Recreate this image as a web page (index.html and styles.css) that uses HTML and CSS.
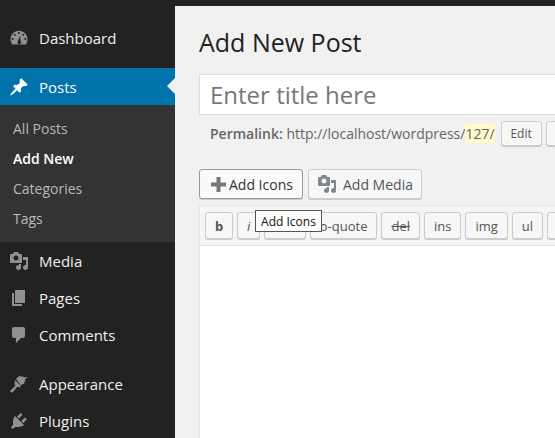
FILE: index.html
```html
<!DOCTYPE html>
<html lang="en">
<head>
<meta charset="utf-8">
<title>Add New Post</title>
<link rel="stylesheet" href="styles.css">
</head>
<body>
<div class="topbar"></div>
<div class="shell">
  <nav class="sidebar">
    <a class="item first"><svg class="ico" viewBox="0 0 20 20"><path fill-rule="evenodd" d="M3.300 16.500h13.400c1.100-1.400 1.800-3.300 1.800-5.300 0-4.700-3.800-8.500-8.500-8.500s-8.500 3.800-8.500 8.500c0 2 .7 3.900 1.800 5.300zM10 4a1 1 0 1 1 0 2 1 1 0 0 1 0-2zM5.800 5.700a1 1 0 1 1 0 2 1 1 0 0 1 0-2zm8.400 0a1 1 0 1 1 0 2 1 1 0 0 1 0-2zM3.700 10a1 1 0 1 1 0 2 1 1 0 0 1 0-2zm12.600 0a1 1 0 1 1 0 2 1 1 0 0 1 0-2zM11.200 7.500l.3 5.500a1.800 1.800 0 1 1-2.600.2z"/></svg><span>Dashboard</span></a>
    <a class="item current"><svg class="ico" viewBox="0 0 20 20"><path d="M10.440 3.020l1.820-1.820 6.360 6.350-1.830 1.820c-1.050-.68-2.480-.57-3.410.36l-.75.75c-.92.930-1.040 2.350-.35 3.410l-1.830 1.820-2.410-2.410-2.800 2.790c-.42.420-3.380 2.710-3.800 2.290s1.860-3.390 2.280-3.810l2.790-2.790L4.100 9.360l1.830-1.820c1.050.69 2.480.57 3.400-.36l.75-.75c.93-.92 1.050-2.350.36-3.410z"/></svg><span>Posts</span><i class="notch"></i></a>
    <div class="submenu">
      <a>All Posts</a>
      <a class="on">Add New</a>
      <a>Categories</a>
      <a>Tags</a>
    </div>
    <a class="item"><svg class="ico" viewBox="0 0 20 20"><path d="M13 11V4c0-.55-.45-1-1-1h-1.670L9 1H5L3.670 3H2c-.55 0-1 .45-1 1v7c0 .55.45 1 1 1h10c.55 0 1-.45 1-1zM7 4.500c1.380 0 2.500 1.120 2.500 2.500S8.380 9.500 7 9.500 4.500 8.380 4.500 7 5.620 4.500 7 4.500zM14 6h5v10.500c0 1.380-1.120 2.500-2.500 2.500S14 17.880 14 16.500s1.120-2.500 2.500-2.500c.17 0 .34.020.5.050V9h-3V6zm-4 8.050V13h2v3.500c0 1.380-1.120 2.500-2.500 2.500S7 17.880 7 16.500 8.120 14 9.500 14c.17 0 .34.020.5.050z" fill-rule="evenodd"/></svg><span>Media</span></a>
    <a class="item"><svg class="ico" viewBox="0 0 20 20"><path d="M6 15V2h10v13H6zm-1 1h8v2H3V5h2v11z"/></svg><span>Pages</span></a>
    <a class="item"><svg class="ico" viewBox="0 0 20 20"><path d="M5 2h9c1.100 0 2 .9 2 2v7c0 1.100-.9 2-2 2h-2l-5 5v-5H5c-1.100 0-2-.9-2-2V4c0-1.100.9-2 2-2z"/></svg><span>Comments</span></a>
    <a class="item sep"><svg class="ico" viewBox="0 0 20 20"><path d="M7 5l2-2 2-1.500 1 1.500 2-1 .5 1.500 4-.5-3 3 1.500 1.500-2 .5.5 2-2 0-1.500 1.500zM6 6l6 6-2 1.500-1.500-1L4 18c-.6.7-1.800.6-2.300.1-.5-.5-.4-1.500.3-2.100l4.500-4.500-1-1.500z"/></svg><span>Appearance</span></a>
    <a class="item"><svg class="ico" viewBox="0 0 20 20"><path d="M13.110 4.360L9.870 7.600 8 5.730l3.240-3.240c.35-.34 1.050-.2 1.560.32.52.51.66 1.210.31 1.550zm-8 1.770l.91-1.120 9.010 9.010-1.190.84c-.71.710-2.630 1.160-3.820 1.160H6.140L4.900 17.260c-.59.590-1.540.59-2.120 0-.59-.58-.59-1.530 0-2.120l1.240-1.240v-3.880c0-1.130.4-3.050 1.090-3.890zm7.260 3.970l3.240-3.240c.34-.35 1.040-.21 1.550.31.520.51.66 1.210.31 1.560l-3.240 3.240z"/></svg><span>Plugins</span></a>
  </nav>
  <main class="content">
    <h1>Add New Post</h1>
    <div class="title-box">Enter title here</div>
    <div class="permalink"><span class="url"><b>Permalink:</b> http://localhost/wordpress/<mark>127/</mark></span><button class="btn small">Edit</button><button class="btn small stub"></button></div>
    <div class="media-row">
      <button class="btn big active"><svg class="plus" viewBox="0 0 15 15"><path d="M5.500 0h4v5.500H15v4H9.500V15h-4V9.500H0v-4h5.500z"/></svg>Add Icons</button>
      <button class="btn big"><svg class="mini" viewBox="0 0 20 20"><path d="M13 11V4c0-.55-.45-1-1-1h-1.670L9 1H5L3.670 3H2c-.55 0-1 .45-1 1v7c0 .55.45 1 1 1h10c.55 0 1-.45 1-1zM7 4.500c1.380 0 2.500 1.120 2.500 2.500S8.380 9.500 7 9.500 4.500 8.380 4.500 7 5.620 4.500 7 4.500zM14 6h5v10.500c0 1.380-1.120 2.500-2.500 2.500S14 17.880 14 16.500s1.120-2.500 2.500-2.500c.17 0 .34.020.5.050V9h-3V6zm-4 8.050V13h2v3.500c0 1.380-1.120 2.500-2.500 2.500S7 17.880 7 16.500 8.120 14 9.500 14c.17 0 .34.020.5.050z" fill-rule="evenodd"/></svg>Add Media</button>
    </div>
    <div class="editor">
      <div class="toolbar">
        <button class="qt strong">b</button>
        <button class="qt em">i</button>
        <button class="qt">link</button>
        <button class="qt">b-quote</button>
        <button class="qt strike">del</button>
        <button class="qt">ins</button>
        <button class="qt">img</button>
        <button class="qt">ul</button>
        <button class="qt">ol</button>
      </div>
      <div class="tooltip">Add Icons</div>
      <div class="area"></div>
    </div>
  </main>
</div>
</body>
</html>
```
FILE: styles.css
```css
html, body { margin: 0; height: 100%; overflow: hidden; }
body { background: #f1f1f1; font-family: "Open Sans", sans-serif; font-size: 14px; color: #444; }
.topbar { height: 6px; background: #222; }
.shell { display: flex; height: 432px; }
.sidebar { flex: 0 0 175px; background: #222; padding-top: 13px; color: #eee; font-size: 15px; }
.item { display: flex; align-items: center; height: 37px; color: #eee; position: relative; }
.item.first { margin-bottom: 12px; }
.item.sep { margin-top: 12px; }
.item span { margin-left: 10px; }
.ico { width: 20px; height: 20px; margin-left: 9px; fill: #8f9092; flex: none; }
.current { background: #0073aa; color: #fff; }
.current .ico { fill: #fff; }
.notch { position: absolute; right: 0; top: 10px; border: 8px solid transparent; border-right-color: #f1f1f1; border-left-width: 0; }
.submenu { background: #333; padding: 9px 0 8px; display: flex; flex-direction: column; }
.submenu a { height: 30px; line-height: 30px; padding-left: 13px; color: #b4b9be; font-size: 14px; }
.submenu .on { color: #fff; font-weight: 600; }
.content { flex: 1; min-width: 0; padding-left: 24px; overflow: hidden; }
h1 { margin: 0; height: 68px; box-sizing: border-box; padding-top: 17px; font-size: 25px; font-weight: 400; line-height: 39px; color: #222; }
.title-box { width: 500px; height: 41px; box-sizing: border-box; border: 1px solid #ddd; background: #fff; color: #777; font-size: 24px; line-height: 39px; padding-left: 10px; }
.permalink { display: flex; align-items: center; height: 26px; margin-top: 5px; padding-left: 11px; width: 500px; white-space: pre; color: #666; }
.permalink b { font-weight: 600; }
mark { background: #fffbcc; color: #666; }
.btn { font-family: inherit; background: #f7f7f7; border: 1px solid #ccc; border-radius: 3px; color: #555; box-shadow: 0 1px 0 #ccc; padding: 0; flex: none; }
.small { height: 25px; width: 41px; font-size: 12px; margin-left: 6px; }
.stub { margin-left: 4px; }
.media-row { display: flex; gap: 5px; margin-top: 23px; }
.big { height: 30px; font-size: 14px; display: flex; align-items: center; }
.big.active { width: 104px; border-color: #999; color: #333; padding-left: 11px; background: #fafafa; }
.big:not(.active) { width: 114px; padding-left: 8px; }
.plus { width: 15px; height: 15px; fill: #777; margin-right: 3px; }
.mini { width: 20px; height: 20px; fill: #82878c; margin-right: 6px; }
.editor { position: relative; margin-top: 6px; width: 500px; border: 1px solid #e5e5e5; border-bottom: 0; background: #fff; height: 300px; }
.toolbar { display: flex; gap: 4px; background: #f5f5f5; border-bottom: 1px solid #e5e5e5; height: 40px; box-sizing: border-box; padding: 6px 5px; }
.qt { font-family: inherit; font-size: 13px; height: 27px; padding: 0 9px; background: #f7f7f7; border: 1px solid #ccc; border-radius: 3px; box-shadow: 0 1px 0 #ccc; color: #555; flex: none; }
.strong { font-weight: 700; }
.em { font-style: italic; width: 23px; padding: 0; }
.strike { text-decoration: line-through; }
.tooltip { position: absolute; left: 55px; top: 4px; width: 67px; height: 22px; line-height: 22px; box-sizing: border-box; border: 1px solid #555; background: #fff; color: #111; font-size: 12px; text-align: center; }
```
